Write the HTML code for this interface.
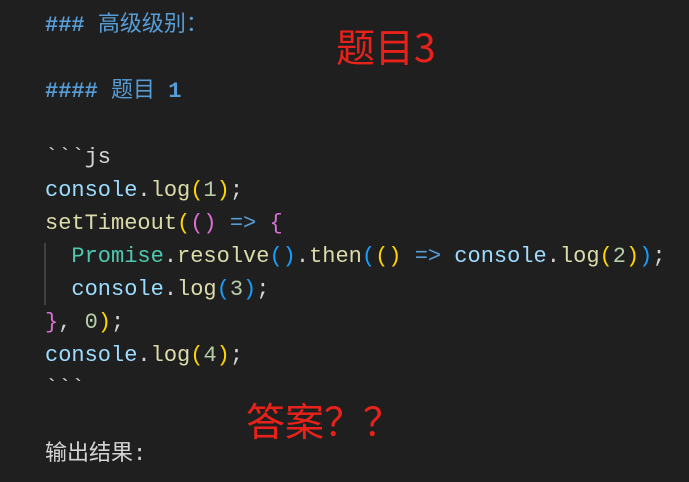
<!DOCTYPE html><html><head><meta charset="utf-8"><style>
body{margin:0;width:689px;height:482px;background:#1f1f1f;overflow:hidden;position:relative}
.l{position:absolute;left:45px;font-family:"Liberation Mono","Noto Sans CJK SC",monospace;font-size:22px;color:#d4d4d4;white-space:pre;line-height:33px}
.h{color:#569cd6;font-weight:bold}
.c{color:#9cdcfe}.f{color:#dcdcaa}.y{color:#ffd700}.m{color:#da70d6}.b{color:#179fff}.n{color:#b5cea8}.t{color:#4ec9b0}.k{color:#569cd6}
.r{position:absolute;color:#e8221b;font-family:"Noto Sans CJK SC",sans-serif;font-size:39px;line-height:1}
.g{position:absolute;left:44px;top:243px;width:2px;height:62px;background:#404040}
</style></head><body>
<div class="l h" style="top:9px">### <span style="font-weight:normal">高级级别：</span></div>
<div class="l h" style="top:75px">#### <span style="font-weight:normal">题目</span> 1</div>
<div class="l" style="top:141px">&#96;&#96;&#96;js</div>
<div class="l" style="top:174px"><span class="c">console</span>.<span class="f">log</span><span class="y">(</span><span class="n">1</span><span class="y">)</span>;</div>
<div class="l" style="top:207px"><span class="f">setTimeout</span><span class="y">(</span><span class="m">()</span> <span class="k">=&gt;</span> <span class="m">{</span></div>
<div class="g"></div>
<div class="l" style="top:240px">  <span class="t">Promise</span>.<span class="f">resolve</span><span class="b">()</span>.<span class="f">then</span><span class="b">(</span><span class="y">()</span> <span class="k">=&gt;</span> <span class="c">console</span>.<span class="f">log</span><span class="y">(</span><span class="n">2</span><span class="y">)</span><span class="b">)</span>;</div>
<div class="l" style="top:273px">  <span class="c">console</span>.<span class="f">log</span><span class="b">(</span><span class="n">3</span><span class="b">)</span>;</div>
<div class="l" style="top:306px"><span class="m">}</span>, <span class="n">0</span><span class="y">)</span>;</div>
<div class="l" style="top:339px"><span class="c">console</span>.<span class="f">log</span><span class="y">(</span><span class="n">4</span><span class="y">)</span>;</div>
<div class="l" style="top:372px">&#96;&#96;&#96;</div>
<div class="l" style="top:438px">输出结果:</div>
<div class="r" style="left:336px;top:27px">题目3</div>
<div class="r" style="left:246px;top:401px">答案？？</div>
</body></html>
